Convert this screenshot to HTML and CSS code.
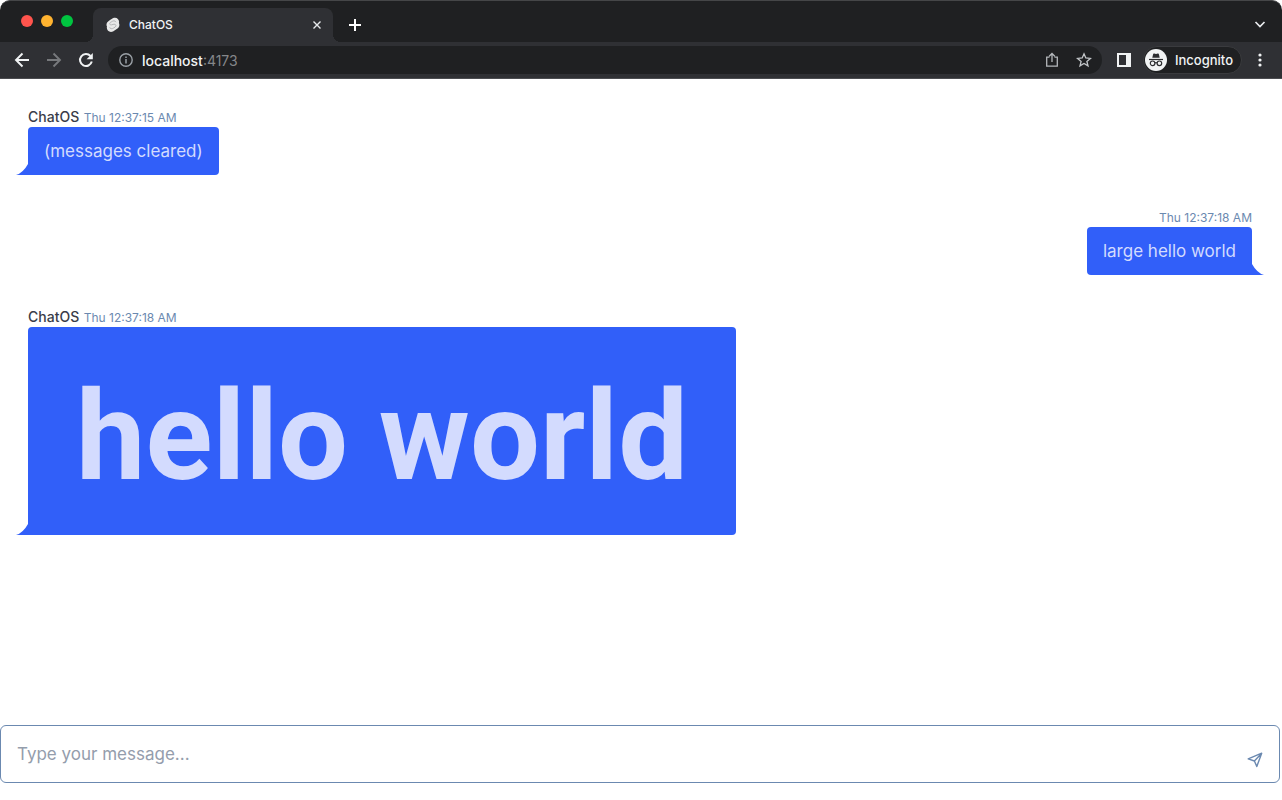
FILE: index.html
```html
<!DOCTYPE html>
<html lang="en">
<head>
<meta charset="utf-8">
<meta name="viewport" content="width=device-width, initial-scale=1">
<title>ChatOS</title>
<link rel="stylesheet" href="styles.css">
</head>
<body>
<div class="window">
  <header class="chrome">
    <div class="tab-strip">
      <div class="lights">
        <button class="light light-close" aria-label="Close window"></button>
        <button class="light light-min" aria-label="Minimize window"></button>
        <button class="light light-max" aria-label="Maximize window"></button>
      </div>
      <div class="tab">
        <svg class="favicon" viewBox="0 0 16 16" width="16" height="16" aria-hidden="true">
          <path d="M8.200 1.100 5 3.100C1.600 5.200.8 7.600 2 9.600c-1 3.300 2.300 6.600 6 4.900l3-1.900c3.300-2 4-4.500 2.900-6.500C14.900 2.500 11.500-.4 8.200 1.100z" fill="#e8e8e8"/>
          <path d="M11 5.200C10 3.200 8 3.700 6.800 4.600L5.500 5.400C3.800 6.700 5 8.200 6.600 7.800L9 7.200C11 7 11.700 8.900 10.200 10L8.700 11C7 12.200 5 11.900 4.700 10.300" fill="none" stroke="#b4b5b7" stroke-width="1"/>
        </svg>
        <span class="tab-title">ChatOS</span>
        <button class="icon-button tab-close" aria-label="Close tab">
          <svg viewBox="0 0 10 10" width="10" height="10"><path d="M1.500 1.500l7 7M8.500 1.500l-7 7" stroke="#e8eaed" stroke-width="1.400" fill="none"/></svg>
        </button>
      </div>
      <button class="icon-button new-tab" aria-label="New tab">
        <svg viewBox="0 0 12 12" width="12" height="12"><path d="M6 0v12M0 6h12" stroke="#fff" stroke-width="2"/></svg>
      </button>
      <button class="icon-button tab-search" aria-label="Search tabs">
        <svg viewBox="0 0 12 12" width="12" height="12"><path d="M1.500 4 6 8.500 10.500 4" stroke="#e8eaed" stroke-width="1.700" fill="none"/></svg>
      </button>
    </div>
    <div class="toolbar">
      <button class="icon-button" aria-label="Back">
        <svg viewBox="0 0 16 16" width="16" height="16"><path d="M15 8H2M8.500 1.500 2 8l6.500 6.500" stroke="#f1f3f4" stroke-width="1.900" fill="none"/></svg>
      </button>
      <button class="icon-button" aria-label="Forward" disabled>
        <svg viewBox="0 0 16 16" width="16" height="16"><path d="M1 8h13M7.500 1.500 14 8l-6.500 6.500" stroke="#77797c" stroke-width="1.900" fill="none"/></svg>
      </button>
      <button class="icon-button" aria-label="Reload">
        <svg viewBox="0 0 16 16" width="16" height="16"><path d="M13.800 9.600A6 6 0 1 1 12.500 4" stroke="#f1f3f4" stroke-width="2" fill="none"/><path d="M14.800 1v6.200H8.600z" fill="#f1f3f4"/></svg>
      </button>
      <div class="address">
        <svg viewBox="0 0 14 14" width="14" height="14" aria-hidden="true"><circle cx="7" cy="7" r="6.200" fill="none" stroke="#9aa0a6" stroke-width="1.400"/><path d="M7 6v4.500M7 3.400v1.500" stroke="#9aa0a6" stroke-width="1.500"/></svg>
        <span class="url">localhost<span class="port">:4173</span></span>
        <button class="icon-button" aria-label="Share">
          <svg viewBox="0 0 16 16" width="16" height="16"><path d="M5.500 5.200H2.700v9h10.600v-9h-2.800M8 10V1.800M5.200 4.300 8 1.500l2.800 2.800" stroke="#b4b7bb" stroke-width="1.300" fill="none"/></svg>
        </button>
        <button class="icon-button" aria-label="Bookmark this page">
          <svg viewBox="0 0 16 16" width="16" height="16"><path d="M8 1.800 9.800 6l4.600.4-3.500 3 1.100 4.500L8 11.500l-4 2.400 1.100-4.500-3.500-3L6.200 6z" stroke="#c3c6c9" stroke-width="1.300" fill="none"/></svg>
        </button>
      </div>
      <button class="icon-button" aria-label="Side panel">
        <svg viewBox="0 0 14 14" width="14" height="14"><path d="M0 0h14v14H0zM2 2v10h7V2z" fill="#f1f3f4" fill-rule="evenodd"/></svg>
      </button>
      <button class="incognito">
        <svg viewBox="0 0 22 22" width="22" height="22" aria-hidden="true">
          <circle cx="11" cy="11" r="11" fill="#f1f3f4"/>
          <path d="M7.300 8.800 8.100 5.200Q8.400 4.300 9.200 4.600L11 5l1.800-.4q.8-.3 1.100.6l.8 3.600z" fill="#2b2c2f"/>
          <path d="M4 10.500h14" stroke="#2b2c2f" stroke-width="1.200"/>
          <g fill="none" stroke="#2b2c2f" stroke-width="1.200"><circle cx="7.600" cy="14.300" r="2.300"/><circle cx="14.400" cy="14.300" r="2.300"/><path d="M9.900 14q1.100-.7 2.200 0"/></g>
        </svg>
        Incognito
      </button>
      <button class="icon-button" aria-label="Menu">
        <svg viewBox="0 0 4 14" width="4" height="14"><circle cx="2" cy="2" r="1.600" fill="#f1f3f4"/><circle cx="2" cy="7" r="1.600" fill="#f1f3f4"/><circle cx="2" cy="12" r="1.600" fill="#f1f3f4"/></svg>
      </button>
    </div>
  </header>

  <main class="messages">
    <article class="message">
      <div class="meta"><span class="author">ChatOS</span> <time>Thu 12:37:15 AM</time></div>
      <div class="bubble">(messages cleared)<svg class="tail" viewBox="0 0 12 12" width="12" height="12" aria-hidden="true"><path d="M12 1Q7 10 0 12H12z"/></svg></div>
    </article>
    <article class="message mine">
      <div class="meta"><time>Thu 12:37:18 AM</time></div>
      <div class="bubble">large hello world<svg class="tail" viewBox="0 0 12 12" width="12" height="12" aria-hidden="true"><path d="M0 1Q5 10 12 12H0z"/></svg></div>
    </article>
    <article class="message">
      <div class="meta"><span class="author">ChatOS</span> <time>Thu 12:37:18 AM</time></div>
      <div class="bubble large">hello world<svg class="tail" viewBox="0 0 12 12" width="12" height="12" aria-hidden="true"><path d="M12 1Q7 10 0 12H12z"/></svg></div>
    </article>
  </main>

  <form class="composer">
    <input class="composer-input" type="text" aria-label="Message" placeholder="Type your message...">
    <button class="icon-button send" type="submit" aria-label="Send">
      <svg viewBox="0 0 16 16" width="16" height="16"><path d="M1.200 6.800 14.700 1.200 9.800 14.500 7.400 9zM7.400 9l7.300-7.800" stroke="#6b89b0" stroke-width="1.400" stroke-linejoin="round" fill="none"/></svg>
    </button>
  </form>
</div>
</body>
</html>
```
FILE: styles.css
```css
* { box-sizing: border-box; }

body {
  margin: 0;
  background: #fff;
  font-family: Inter, "Liberation Sans", sans-serif;
}

button, input { font: inherit; }

.window {
  display: flex;
  flex-direction: column;
  min-height: 100vh;
  padding-bottom: 17px;
}

.chrome {
  background: #1f2022;
  border-top: 1px solid #454648;
  border-bottom: 1px solid #4b4c50;
  border-radius: 10px 10px 0 0;
  color: #f1f3f4;
}

.tab-strip {
  display: flex;
  align-items: center;
  height: 41px;
  padding: 0 16px 0 21px;
}

.lights {
  display: flex;
  gap: 8px;
  padding-bottom: 1px;
}

.light {
  width: 12px;
  height: 12px;
  padding: 0;
  border: 0;
  border-radius: 50%;
}

.light-close { background: #ff544d; }
.light-min { background: #ffb330; }
.light-max { background: #00c440; }

.tab {
  position: relative;
  display: flex;
  align-items: center;
  align-self: flex-end;
  width: 240px;
  height: 34px;
  margin-left: 20px;
  padding: 0 10px 0 12px;
  background: #2f3034;
  border-radius: 8px 8px 0 0;
}

.tab::before, .tab::after {
  content: "";
  position: absolute;
  bottom: 0;
  width: 8px;
  height: 8px;
}

.tab::before {
  left: -8px;
  background: radial-gradient(circle at 0 0, #1f2022 8px, #2f3034 8px);
}

.tab::after {
  right: -8px;
  background: radial-gradient(circle at 100% 0, #1f2022 8px, #2f3034 8px);
}

.tab-title {
  flex: 1;
  margin-left: 8px;
  padding-bottom: 2px;
  font-size: 12px;
  font-weight: 500;
}

.icon-button {
  display: flex;
  align-items: center;
  justify-content: center;
  flex: none;
  padding: 0;
  border: 0;
  background: none;
}

.tab-close { width: 12px; height: 12px; }
.new-tab { margin-left: 16px; padding-top: 6px; }
.tab-search { margin-left: auto; padding-top: 4px; }

.toolbar {
  display: flex;
  align-items: center;
  gap: 16px;
  height: 36px;
  padding: 0 20px 0 14px;
  background: #2f3034;
}

.address {
  display: flex;
  flex: 1;
  align-items: center;
  gap: 16px;
  height: 28px;
  margin: 0 -1px 0 -2px;
  padding: 0 10px 0 11px;
  border-radius: 14px;
  background: #1f2022;
}

.url {
  flex: 1;
  margin-left: -7px;
  font-size: 14px;
  font-weight: 500;
}

.port {
  color: #85878a;
  font-weight: 400;
}

.incognito {
  display: flex;
  align-items: center;
  gap: 8px;
  height: 28px;
  margin-left: -4px;
  padding: 0 8px 0 1px;
  border: 1px solid #3a3b3e;
  border-radius: 14px;
  background: #1f2022;
  color: #f1f3f4;
  font-size: 13px;
  font-weight: 500;
}

.messages {
  display: flex;
  flex: 1;
  flex-direction: column;
  align-items: flex-start;
  gap: 32px;
  padding: 28px 30px 28px 28px;
}

.message { display: block; }

.mine { align-self: flex-end; }
.mine .meta { text-align: right; }

.meta {
  height: 20px;
  line-height: 18px;
  white-space: nowrap;
}

.author {
  color: #3a3d49;
  font-size: 14px;
  font-weight: 500;
}

time {
  color: #6b89b0;
  font-size: 12px;
}

.bubble {
  position: relative;
  padding: 12px 16px;
  border-radius: 4px 4px 4px 0;
  background: #315ff9;
  color: #d3dbfe;
  font-size: 17px;
  line-height: 24px;
}

.mine .bubble { border-radius: 4px 4px 0 4px; }

.large {
  padding: 46px 48px 34px;
  font-family: Roboto, "Liberation Sans", sans-serif;
  font-size: 124px;
  font-weight: 700;
  line-height: 128px;
}

.tail {
  position: absolute;
  bottom: 0;
  left: -12px;
  fill: #315ff9;
}

.mine .tail {
  right: -12px;
  left: auto;
}

.composer {
  display: flex;
  align-items: center;
  height: 58px;
  margin-right: 2px;
  padding: 0 16px;
  border: 1px solid #6b89b0;
  border-radius: 6px;
}

.composer-input {
  flex: 1;
  min-width: 0;
  height: 32px;
  padding: 0;
  border: 0;
  outline: 0;
  background: none;
  color: #3a3d49;
  font-size: 17px;
}

.composer-input::placeholder { color: #949dac; opacity: 1; }

.send { margin-top: 12px; }
```
